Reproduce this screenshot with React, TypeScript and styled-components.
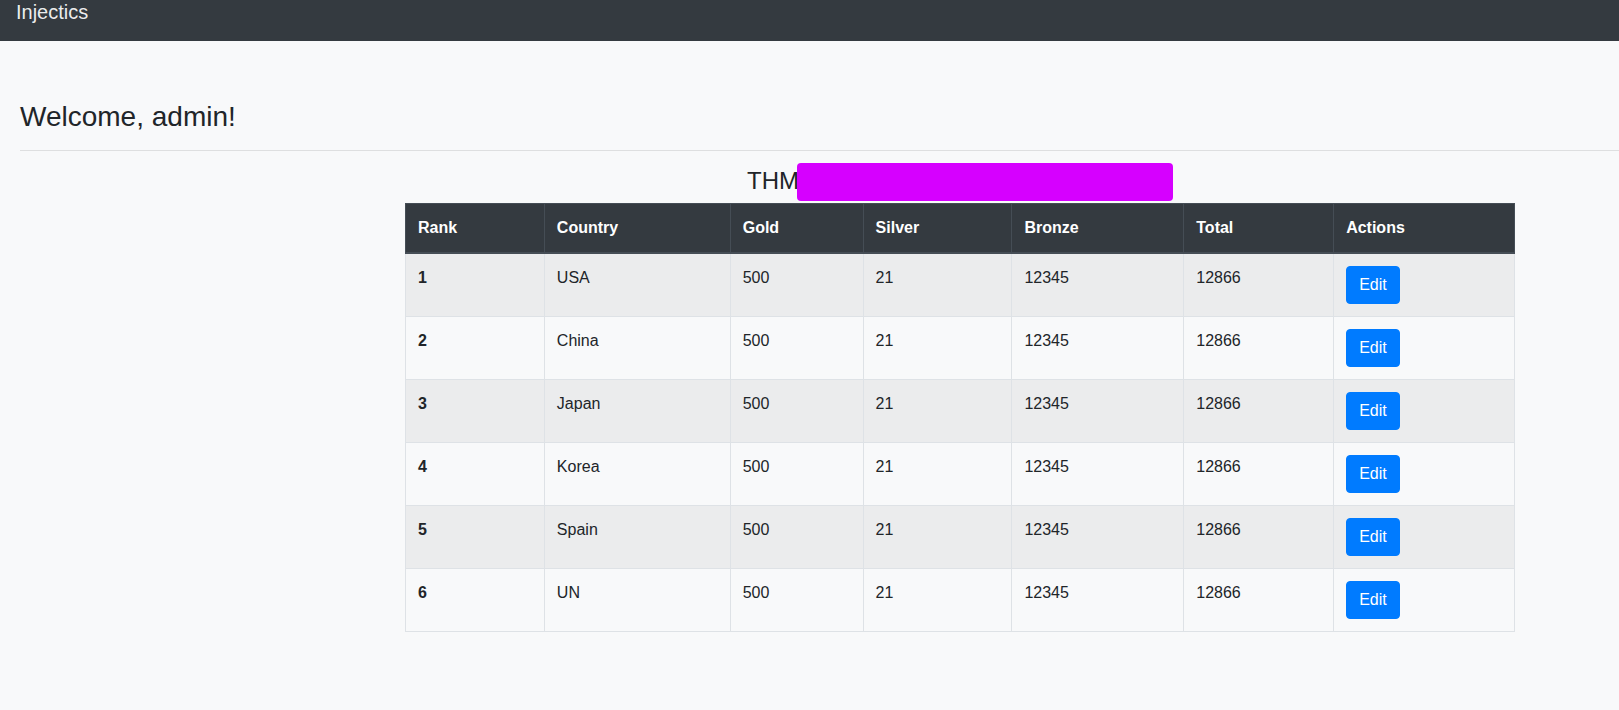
import React from 'react';
import styled, { createGlobalStyle } from 'styled-components';

const GlobalStyle = createGlobalStyle`
  html, body {
    margin: 0;
    padding: 0;
    min-height: 100%;
    background: #f8f9fa;
    color: #212529;
    font-family: "Liberation Sans", Arial, sans-serif;
    font-size: 16px;
    line-height: 1.5;
    overflow-x: hidden;
  }
  * {
    box-sizing: border-box;
  }
`;

const NavBar = styled.nav`
  height: 41px;
  padding: 2px 16px;
  background: #343a40;
`;

const Brand = styled.span`
  display: block;
  font-size: 20px;
  line-height: 20px;
  color: rgba(255, 255, 255, 0.92);
`;

const Main = styled.main`
  padding: 0 0 0 20px;
  margin-top: 59px;
`;

const Greeting = styled.h3`
  margin: 0 0 8px;
  font-size: 28px;
  font-weight: 500;
  line-height: 1.2;
`;

const Divider = styled.hr`
  margin: 16px 0;
  border: 0;
  border-top: 1px solid rgba(0, 0, 0, 0.1);
`;

const Board = styled.section`
  width: 1110px;
  margin-left: 385px;
`;

const BoardTitle = styled.h4`
  margin: 0 0 8px;
  text-align: center;
  font-size: 24px;
  font-weight: 500;
  line-height: 1.2;
`;

const Redacted = styled.span`
  display: inline-block;
  width: 376px;
  height: 38px;
  margin: -4px 0 -7px -2px;
  vertical-align: -5px;
  background: #d600ff;
  border-radius: 4px;
`;

const Table = styled.table`
  width: 100%;
  border-collapse: collapse;
  border: 1px solid #dee2e6;
`;

const HeadCell = styled.th<{ $w: number }>`
  width: ${p => p.$w}px;
  padding: 12px;
  text-align: left;
  vertical-align: bottom;
  font-weight: 700;
  color: #fff;
  background: #343a40;
  border: 1px solid #454d55;
  border-bottom-width: 2px;
`;

const Row = styled.tr<{ $odd: boolean }>`
  background: ${p => (p.$odd ? 'rgba(0, 0, 0, 0.05)' : 'transparent')};
`;

const Cell = styled.td<{ $bold?: boolean }>`
  padding: 12px;
  vertical-align: top;
  border: 1px solid #dee2e6;
  font-weight: ${p => (p.$bold ? 700 : 400)};
`;

const EditButton = styled.button`
  display: inline-block;
  padding: 6px 12px;
  font-family: inherit;
  font-size: 16px;
  line-height: 1.5;
  color: #fff;
  background: #007bff;
  border: 1px solid #007bff;
  border-radius: 4px;
  cursor: pointer;
`;

const columns = [
  { label: 'Rank', w: 139 },
  { label: 'Country', w: 186 },
  { label: 'Gold', w: 133 },
  { label: 'Silver', w: 149 },
  { label: 'Bronze', w: 172 },
  { label: 'Total', w: 150 },
  { label: 'Actions', w: 181 },
];

const countries = ['USA', 'China', 'Japan', 'Korea', 'Spain', 'UN'];

export default function App() {
  return (
    <>
      <GlobalStyle />
      <NavBar>
        <Brand>Injectics</Brand>
      </NavBar>
      <Main>
        <Greeting>Welcome, admin!</Greeting>
        <Divider />
        <Board>
          <BoardTitle>
            THM<Redacted />
          </BoardTitle>
          <Table>
            <thead>
              <tr>
                {columns.map(c => (
                  <HeadCell key={c.label} $w={c.w}>
                    {c.label}
                  </HeadCell>
                ))}
              </tr>
            </thead>
            <tbody>
              {countries.map((country, i) => (
                <Row key={country} $odd={i % 2 === 0}>
                  <Cell $bold>{i + 1}</Cell>
                  <Cell>{country}</Cell>
                  <Cell>500</Cell>
                  <Cell>21</Cell>
                  <Cell>12345</Cell>
                  <Cell>12866</Cell>
                  <Cell>
                    <EditButton>Edit</EditButton>
                  </Cell>
                </Row>
              ))}
            </tbody>
          </Table>
        </Board>
      </Main>
    </>
  );
}
